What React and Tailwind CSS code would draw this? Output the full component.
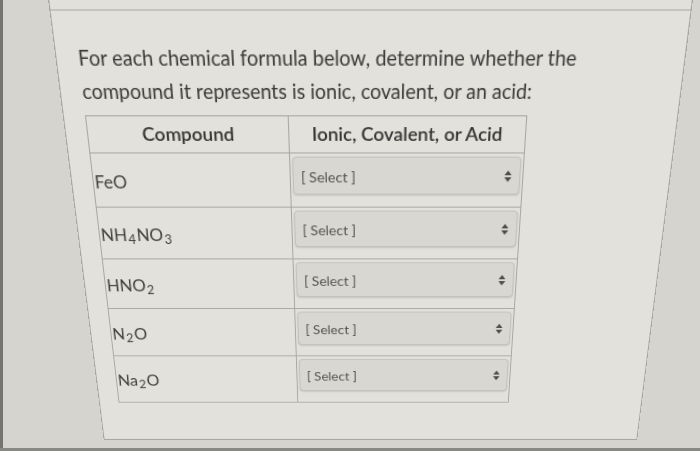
import React from "react";

const compounds = [
  { id: "feo", parts: [["FeO", false]] },
  { id: "nh4no3", parts: [["NH", false], ["4", true], ["NO", false], ["3", true]] },
  { id: "hno2", parts: [["HNO", false], ["2", true]] },
  { id: "n2o", parts: [["N", false], ["2", true], ["O", false]] },
  { id: "na2o", parts: [["Na", false], ["2", true], ["O", false]] },
];

function Formula({ parts }) {
  return (
    <>
      {parts.map(([t, isSub], i) =>
        isSub ? (
          <sub key={i} className="mx-[1px]">
            {t}
          </sub>
        ) : (
          <span key={i}>{t}</span>
        )
      )}
    </>
  );
}

function SelectBox() {
  return (
    <div className="mx-[2px] mt-[3px] h-[37px] flex items-center justify-between pl-[7px] pr-[7px] rounded-[4px] border border-[#c4c2bd] bg-[#d8d7d2] shadow-[0_1px_2px_rgba(0,0,0,0.15)]">
      <span className="text-[14px] leading-none text-[#555350] pt-[3px]">[ Select ]</span>
      <svg width="8" height="12" viewBox="0 0 8 12" className="mt-[2px]">
        <path d="M4 0.5 L7.5 5 L0.5 5 Z M0.5 7 L7.5 7 L4 11.5 Z" fill="#4f4d4a" />
      </svg>
    </div>
  );
}

export default function App() {
  return (
    <div className="w-[700px] h-[451px] overflow-hidden flex flex-col bg-[#d6d4cf] font-['Lato','Open_Sans',sans-serif]">
      <div className="h-[448px] flex shrink-0">
        <div className="w-[3px] shrink-0 bg-[#76746f]" />
        <div className="ml-[76px] w-[583px] h-[465px] shrink-0 [perspective:600px] [perspective-origin:291px_244px]">
          {/* question card, tilted like the photo */}
          <div className="w-[583px] h-[465px] flex flex-col border-x border-[#a9a7a2] bg-[#e2e1dc] origin-[291px_244px] [transform:rotateX(-14.6deg)]">
            <div className="h-[25px] shrink-0 border-b border-[#b0aea9] bg-[#e1e0db]" />
            <div className="flex-1 border-b border-[#a9a7a2] px-[20px] pt-[27px]">
              <p className="text-[18.5px] leading-[29.5px] text-[#3b3a38]">
                For each chemical formula below, determine whether the
                <br />
                compound it represents is ionic, covalent, or an acid:
              </p>

              <div className="mt-[6.5px] w-[419px] border border-[#a9a7a2]">
                <div className="h-[35px] flex border-b border-[#a9a7a2] text-[18px] font-semibold text-[#353432]">
                  <div className="w-[192px] shrink-0 border-r border-[#a9a7a2] flex items-center justify-center">
                    Compound
                  </div>
                  <div className="flex-1 flex items-center justify-center">Ionic, Covalent, or Acid</div>
                </div>

                {compounds.map((c, i) => (
                  <div
                    key={c.id}
                    className={`h-[53px] flex ${i < compounds.length - 1 ? "border-b border-[#a9a7a2]" : ""}`}
                  >
                    <div className="w-[192px] shrink-0 border-r border-[#a9a7a2] pl-[1px] pt-[18px] text-[17px] leading-[20px] text-[#403f3c]">
                      <Formula parts={c.parts} />
                    </div>
                    <div className="flex-1">
                      <SelectBox />
                    </div>
                  </div>
                ))}
              </div>
            </div>
          </div>
        </div>
      </div>
      <div className="h-[3px] shrink-0 bg-[#8a8883]" />
    </div>
  );
}
